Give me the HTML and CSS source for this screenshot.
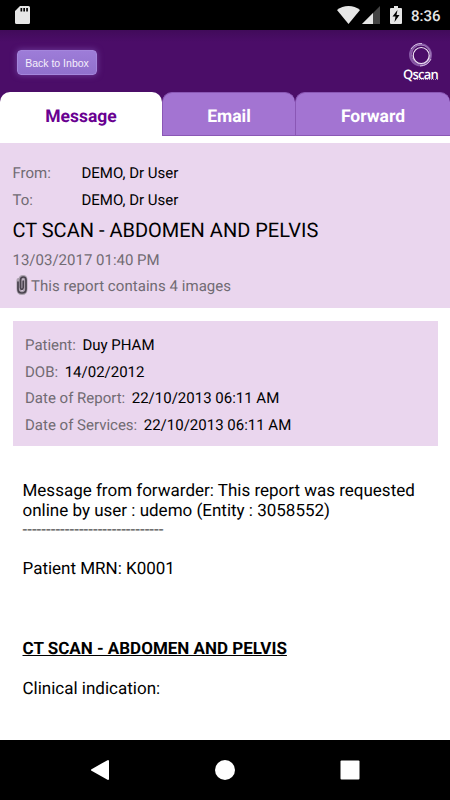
FILE: index.html
```html
<!DOCTYPE html>
<html lang="en">
<head>
  <meta charset="UTF-8">
  <meta name="viewport" content="width=device-width, initial-scale=1.0">
  <title>Qscan - Message</title>
  <link rel="stylesheet" href="styles.css">
</head>
<body>
  <!-- Status bar -->
  <div class="status-bar">
    <svg class="sd-icon" width="15" height="18" viewBox="0 0 15 18">
      <path fill="#e6e6e6" fill-rule="evenodd" d="M5 0h8.500Q15 0 15 1.500v15Q15 18 13.500 18h-12Q0 18 0 16.500V5zM5.500 2v3.500h1.700V2zM8.300 2v3.500H10V2zM11.200 2v3.500h1.700V2z"/>
    </svg>
    <div class="status-right">
      <svg class="wifi-icon" width="23" height="18" viewBox="0 0 23 18">
        <path fill="#e6e6e6" d="M11.500 18 0 4Q5 0 11.500 0T23 4z"/>
      </svg>
      <svg class="signal-icon" width="18" height="18" viewBox="0 0 18 18">
        <path fill="#444" d="M18 0v18H0z"/>
        <path fill="#e6e6e6" d="M11 7v11H0z"/>
      </svg>
      <svg class="battery-icon" width="12" height="18" viewBox="0 0 12 18">
        <path fill="#e6e6e6" d="M4 0h4v2h3q1 0 1 1v14q0 1-1 1H1q-1 0-1-1V3q0-1 1-1h3z"/>
        <path fill="#000" d="M7.500 4 2.500 10.500h3L4.500 16l5-7h-3z"/>
      </svg>
      <span class="clock">8:36</span>
    </div>
  </div>

  <header>
    <div class="toolbar">
      <button class="back-btn">Back to Inbox</button>
      <div class="logo">
        <svg width="26" height="26" viewBox="0 0 26 26" fill="none">
          <circle cx="12.500" cy="12.800" r="10.500" stroke="#8658a5" stroke-width="2"/>
          <circle cx="13" cy="12.500" r="9.500" stroke="#a27bba" stroke-width="1"/>
          <circle cx="13.200" cy="13.500" r="8" stroke="#f1e8f6" stroke-width="1.200"/>
          <path stroke="#d5bce2" stroke-width="1" d="M3 7Q7 1 14 1.500M23 17Q20 23.500 12 24"/>
        </svg>
        <span class="logo-text">Qscan</span>
        <span class="logo-line"></span>
      </div>
    </div>
    <nav class="tabs">
      <div class="tab active">Message</div>
      <div class="tab">Email</div>
      <div class="tab">Forward</div>
    </nav>
  </header>

  <main>
    <!-- Message summary -->
    <section class="summary">
      <div class="row"><span class="label from">From:</span><span>DEMO, Dr User</span></div>
      <div class="row"><span class="label from">To:</span><span>DEMO, Dr User</span></div>
      <h1>CT SCAN - ABDOMEN AND PELVIS</h1>
      <div class="row label">13/03/2017 01:40 PM</div>
      <div class="row label images">
        <svg width="12" height="20" viewBox="0 0 12 20" fill="none">
          <path stroke="#aaa0ad" stroke-width="4" stroke-linecap="round" d="M2.500 5v9q0 4 3.500 4t3.500-4V5q0-3-2.500-3T4.500 5v8"/>
          <path stroke="#49424d" stroke-width="1.700" stroke-linecap="round" d="M2 7v7q0 4 4 4t4-4V5q0-3-2.700-3T4.500 5v7.500q0 1.800 1.300 1.800t1.400-1.800V6"/>
        </svg>
        <span>This report contains 4 images</span>
      </div>
    </section>

    <!-- Patient details -->
    <section class="patient">
      <div class="row"><span class="label">Patient:</span><span>Duy PHAM</span></div>
      <div class="row"><span class="label">DOB:</span><span>14/02/2012</span></div>
      <div class="row"><span class="label">Date of Report:</span><span>22/10/2013 06:11 AM</span></div>
      <div class="row"><span class="label">Date of Services:</span><span>22/10/2013 06:11 AM</span></div>
    </section>

    <article class="report">
      <p>Message from forwarder: This report was requested<br>online by user : udemo (Entity : 3058552)</p>
      <p class="dashes">------------------------------</p>
      <p class="mrn">Patient MRN: K0001</p>
      <h2>CT SCAN - ABDOMEN AND PELVIS</h2>
      <p>Clinical indication:</p>
    </article>
  </main>

  <!-- Android navigation -->
  <footer class="nav-bar">
    <svg width="20" height="22" viewBox="0 0 20 22"><path fill="#fff" stroke="#fff" stroke-width="2" stroke-linejoin="round" d="M18 2v18L2 11z"/></svg>
    <svg width="20" height="20" viewBox="0 0 20 20"><circle cx="10" cy="10" r="10" fill="#fff"/></svg>
    <svg width="20" height="20" viewBox="0 0 20 20"><rect x="0.500" y="0.500" width="19" height="19" rx="1" fill="#fff"/></svg>
  </footer>
</body>
</html>
```
FILE: styles.css
```css
* {
  box-sizing: border-box;
}
body {
  margin: 0;
  height: 800px;
  display: flex;
  flex-direction: column;
  overflow: hidden;
  font-family: Roboto, sans-serif;
  text-rendering: geometricPrecision;
  background: #fff;
  color: #000;
}
svg {
  display: block;
  flex: none;
}
.status-bar {
  height: 30px;
  padding: 0 10px 0 15px;
  display: flex;
  align-items: center;
  justify-content: space-between;
  background: #000;
}
.status-right {
  display: flex;
  align-items: center;
}
.signal-icon {
  margin-left: 2px;
}
.battery-icon {
  margin-left: 10px;
}
.clock {
  width: 29px;
  margin: 1px 0 0 9px;
  font-size: 15px;
  font-weight: 500;
  line-height: 18px;
  white-space: nowrap;
  color: #e6e6e6;
}
header {
  height: 113px;
  background: linear-gradient(#410b5a, #4b0d68 12px, #4b0d68 106px, #fff 106px);
}
.toolbar {
  height: 62px;
  padding: 12px 12px 0 17px;
  display: flex;
  align-items: flex-start;
  justify-content: space-between;
}
.back-btn {
  width: 80px;
  height: 25px;
  margin-top: 8px;
  padding: 0;
  border: 1px solid #a486dc;
  border-radius: 4px;
  background: linear-gradient(#9d7cd8, #9171cd);
  box-shadow: 0 0 6px #7343a0;
  font-family: "Liberation Sans", sans-serif;
  font-size: 10.500px;
  color: #f5effc;
  white-space: nowrap;
}
.logo {
  width: 35px;
  display: flex;
  flex-direction: column;
  align-items: center;
}
.logo-text {
  margin-top: -1px;
  font-family: "Open Sans", sans-serif;
  font-size: 13px;
  font-weight: 600;
  line-height: 14px;
  letter-spacing: -0.800px;
  color: #fff;
}
.logo-line {
  width: 24px;
  margin: -2px 0 0 10px;
  border-top: 1px dotted #a98abd;
}
.tabs {
  height: 51px;
  display: flex;
  align-items: flex-start;
}
.tab {
  width: 133px;
  height: 44px;
  border: 1px solid #8a57b5;
  border-right: 0;
  border-radius: 10px 10px 0 0;
  background: #a374d2;
  color: #fff;
  font-size: 17.500px;
  font-weight: 700;
  line-height: 48px;
  text-align: center;
}
.tab:last-child {
  flex: 1;
}
.tab.active {
  width: 162px;
  height: 51px;
  border: 0;
  background: #fff;
  color: #690091;
  line-height: 50px;
}
main {
  flex: 1;
}
.summary {
  height: 165px;
  padding: 17px 12.500px 0;
  background: #ead6ee;
}
.row {
  height: 26.700px;
  display: flex;
  align-items: center;
  font-size: 15px;
  white-space: nowrap;
}
.label {
  color: #716b73;
}
.from {
  width: 69px;
}
h1 {
  margin: 0;
  height: 33px;
  font-size: 20px;
  font-weight: 400;
  line-height: 34px;
  white-space: nowrap;
}
.images {
  letter-spacing: 0.050px;
}
.images svg {
  margin: -3px 3.500px 0 3px;
}
.patient {
  height: 125px;
  margin: 13px 12px 0 12.500px;
  padding: 10.500px 12.500px;
  background: #ead6ee;
}
.patient .row {
  gap: 6.500px;
}
.report {
  padding: 35px 22.500px 0;
  font-size: 17px;
  line-height: 20px;
  white-space: nowrap;
}
.report p {
  margin: 0;
}
.report .dashes {
  line-height: 18px;
  color: #555;
}
.report .mrn {
  margin-top: 20px;
}
h2 {
  margin: 60px 0 20px;
  font-size: 17px;
  line-height: 20px;
  text-decoration: underline;
}
.nav-bar {
  height: 60px;
  display: flex;
  align-items: center;
  justify-content: center;
  gap: 105px;
  background: #000;
}
```
